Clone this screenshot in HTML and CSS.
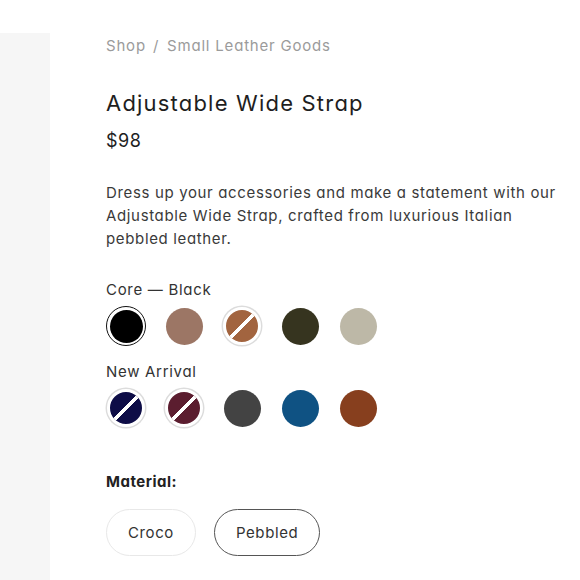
FILE: index.html
```html
<!DOCTYPE html>
<html lang="en">
<head>
<meta charset="utf-8">
<title>Adjustable Wide Strap</title>
<link rel="stylesheet" href="styles.css">
</head>
<body>
<div class="page">
  <aside class="gallery"></aside>
  <main class="product">
    <nav class="crumbs"><a href="#">Shop</a><span class="sep">/</span><a href="#">Small Leather Goods</a></nav>
    <h1 class="title">Adjustable Wide Strap</h1>
    <p class="price">$98</p>
    <p class="desc">Dress up your accessories and make a statement with our Adjustable Wide Strap, crafted from luxurious Italian pebbled leather.</p>

    <div class="group">
      <div class="group-label">Core — Black</div>
      <div class="swatches">
        <button class="swatch selected"><span class="dot c-black"></span></button>
        <button class="swatch"><span class="dot c-taupe"></span></button>
        <button class="swatch sold"><span class="dot c-cognac"></span></button>
        <button class="swatch"><span class="dot c-olive"></span></button>
        <button class="swatch"><span class="dot c-stone"></span></button>
      </div>
    </div>

    <div class="group">
      <div class="group-label">New Arrival</div>
      <div class="swatches">
        <button class="swatch sold"><span class="dot c-navy"></span></button>
        <button class="swatch sold"><span class="dot c-wine"></span></button>
        <button class="swatch"><span class="dot c-charcoal"></span></button>
        <button class="swatch"><span class="dot c-blue"></span></button>
        <button class="swatch"><span class="dot c-rust"></span></button>
      </div>
    </div>

    <div class="material">
      <div class="material-label">Material:</div>
      <div class="pills">
        <button class="pill">Croco</button>
        <button class="pill active">Pebbled</button>
      </div>
    </div>
  </main>
</div>
</body>
</html>
```

FILE: styles.css
```css
* { box-sizing: border-box; }
html, body { margin: 0; background: #fff; }
body {
  font-family: Inter, "Noto Sans", sans-serif;
  font-feature-settings: "cv11";
  color: #222;
}
.page {
  display: flex;
  padding-top: 33px;
  min-height: 580px;
}
.gallery {
  width: 50px;
  flex: none;
  background: #f6f6f6;
  min-height: 547px;
}
.product {
  padding-left: 56px;
  padding-top: 3px;
  width: 500px;
}
.crumbs {
  font-size: 15px;
  line-height: 20px;
  color: #9b9b9b;
  letter-spacing: 0.8px;
}
.crumbs a { color: inherit; text-decoration: none; }
.crumbs .sep { margin: 0 8px 0 7px; }
.title {
  margin: 32px 0 0;
  font-size: 22px;
  font-weight: 400;
  line-height: 30px;
  color: #1e1e1e;
  letter-spacing: 1.2px;
}
.price {
  margin: 11px 0 0;
  font-size: 18px;
  line-height: 24px;
  color: #1e1e1e;
  letter-spacing: 0.5px;
}
.desc {
  margin: 28px 0 0;
  font-size: 15px;
  line-height: 23px;
  color: #3a3a3a;
  letter-spacing: 0.65px;
  width: 460px;
}
.group { margin-top: 30px; }
.group + .group { margin-top: 16px; }
.group-label {
  font-size: 15px;
  line-height: 20px;
  color: #333;
  letter-spacing: 0.7px;
}
.swatches {
  display: flex;
  gap: 18px;
  margin-top: 6px;
}
.swatch {
  width: 40px;
  height: 40px;
  padding: 0;
  border: 0;
  border-radius: 50%;
  background: transparent;
  display: flex;
  align-items: center;
  justify-content: center;
}
.swatch .dot {
  width: 37px;
  height: 37px;
  border-radius: 50%;
  display: block;
}
.swatch.selected {
  border: 1.5px solid #111;
}
.swatch.selected .dot { width: 33px; height: 33px; }
.swatch.sold .dot {
  width: 38px;
  height: 38px;
  border: 3px solid #fff;
  box-shadow: 0 0 0 1.5px #dcdcdc;
  position: relative;
}
.swatch.sold .dot::after {
  content: "";
  position: absolute;
  inset: 0;
  border-radius: 50%;
  background: linear-gradient(135deg, transparent calc(50% - 1.7px), #fff calc(50% - 1.7px), #fff calc(50% + 1.7px), transparent calc(50% + 1.7px));
}
.c-black { background: #000; }
.c-taupe { background: #9c7665; }
.c-cognac { background: #a2643f; }
.c-olive { background: #36341f; }
.c-stone { background: #bdb8a7; }
.c-navy { background: #0e0d47; }
.c-wine { background: #5b1d2f; }
.c-charcoal { background: #434343; }
.c-blue { background: #0f5283; }
.c-rust { background: #873f1e; }

.material { margin-top: 44px; }
.material-label {
  font-size: 15px;
  font-weight: 700;
  line-height: 20px;
  color: #222;
  letter-spacing: 0.5px;
}
.pills {
  display: flex;
  gap: 18px;
  margin-top: 17px;
}
.pill {
  height: 47px;
  padding: 0 21px;
  border-radius: 24px;
  border: 1.5px solid #e8e8e8;
  background: #fff;
  font-family: inherit;
  font-feature-settings: inherit;
  font-size: 15px;
  color: #333;
  letter-spacing: 0.6px;
}
.pill.active { border-color: #555; }
```
